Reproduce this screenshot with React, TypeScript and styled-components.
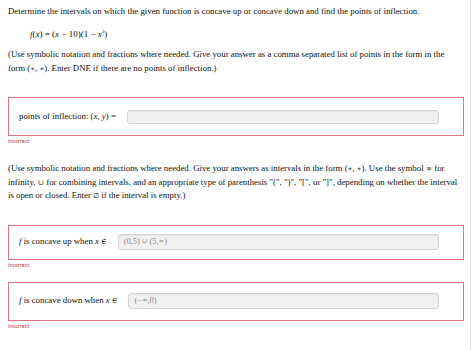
import React from "react";
import styled, { createGlobalStyle } from "styled-components";

const Global = createGlobalStyle`
  html, body { margin: 0; padding: 0; background: #ffffff; }
  body { font-family: "Liberation Serif", "Times New Roman", serif; color: #111111; }
`;

const Page = styled.div`
  width: 456px;
  padding: 5px 6px 0 8px;
  min-height: 345px;
  box-sizing: content-box;
  border-right: 1px solid #e6e6e6;
  font-size: 8.8px;
  line-height: 13.5px;
`;

const Para = styled.p<{ $mt: number }>`
  margin: ${(p) => p.$mt}px 0 0 0;
`;

const Formula = styled.div`
  margin: 6px 0 0 22px;
  font-size: 9px;
`;

const I = styled.i`
  font-style: italic;
`;

const Sym = styled.span<{ $s?: number }>`
  font-family: "DejaVu Serif", serif;
  font-size: ${(p) => p.$s ?? 0.85}em;
`;

const Sup = styled.sup`
  font-size: 5px;
`;

const Box = styled.div<{ $mt: number; $h: number }>`
  margin-top: ${(p) => p.$mt}px;
  height: ${(p) => p.$h}px;
  box-sizing: border-box;
  border: 1px solid #d9747b;
  display: flex;
  align-items: center;
  padding: 0 24px 0 10px;
  gap: 11px;
`;

const Label = styled.span`
  white-space: nowrap;
  font-size: 8.8px;
`;

const Field = styled.div<{ $h: number }>`
  flex: 1;
  height: ${(p) => p.$h}px;
  box-sizing: border-box;
  border: 1px solid #d4d4d4;
  border-radius: 3px;
  background: #f1f1f1;
  display: flex;
  align-items: center;
  padding-left: 5px;
  font-size: 8.4px;
  color: #8a8a8a;
  white-space: pre;
  box-shadow: inset 0 1px 1px rgba(0, 0, 0, 0.04);
`;

const Incorrect = styled.div`
  margin-top: 2px;
  font-family: Lato, "Liberation Sans", sans-serif;
  font-size: 5.4px;
  line-height: 7px;
  color: #c0394a;
`;

const Star = () => <Sym $s={0.8}>∗</Sym>;

export default function App() {
  return (
    <>
      <Global />
      <Page>
        <Para $mt={0}>
          Determine the intervals on which the given function is concave up or concave down and find the points of inflection.
        </Para>
        <Formula>
          <I>f</I>(<I>x</I>) = (<I>x</I> − 10)(1 − <I>x</I><Sup>3</Sup>)
        </Formula>
        <Para $mt={7}>
          (Use symbolic notation and fractions where needed. Give your answer as a comma separated list of points in the form in the<br />
          form (<Star />, <Star />). Enter DNE if there are no points of inflection.)
        </Para>
        <Box $mt={22} $h={39}>
          <Label>points of inflection: (<I>x</I>, <I>y</I>) =</Label>
          <Field $h={14} />
        </Box>
        <Incorrect>Incorrect</Incorrect>
        <Para $mt={17}>
          (Use symbolic notation and fractions where needed. Give your answers as intervals in the form (<Star />, <Star />). Use the symbol <Sym>∞</Sym> for<br />
          infinity, <Sym>∪</Sym> for combining intervals, and an appropriate type of parenthesis "(", ")", "[", or "]", depending on whether the interval<br />
          is open or closed. Enter <Sym>∅</Sym> if the interval is empty.)
        </Para>
        <Box $mt={22} $h={35}>
          <Label><I>f</I> is concave up when <I>x</I> <Sym>∈</Sym></Label>
          <Field $h={16}>(0,5) <Sym $s={0.8}>∪</Sym> (5,<Sym $s={0.8}>∞</Sym>)</Field>
        </Box>
        <Incorrect>Incorrect</Incorrect>
        <Box $mt={13} $h={39}>
          <Label><I>f</I> is concave down when <I>x</I> <Sym>∈</Sym></Label>
          <Field $h={16}>(−<Sym $s={0.8}>∞</Sym>,0)</Field>
        </Box>
        <Incorrect>Incorrect</Incorrect>
      </Page>
    </>
  );
}
